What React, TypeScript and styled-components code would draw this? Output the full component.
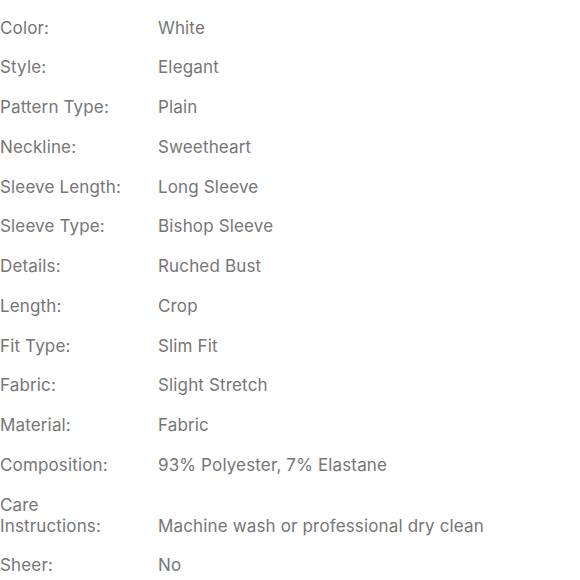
import React from "react";
import styled, { createGlobalStyle } from "styled-components";

const Global = createGlobalStyle`
  html, body { margin: 0; padding: 0; background: #ffffff; }
  body { font-family: Inter, "Noto Sans", "Liberation Sans", sans-serif; }
`;

const Table = styled.div`
  display: grid;
  grid-template-columns: 158px 1fr;
  row-gap: 18.75px;
  padding-top: 17.5px;
  align-items: end;
  font-size: 17px;
  line-height: 21px;
  letter-spacing: 0.15px;
  color: #767676;
`;

const Label = styled.div`
  white-space: pre-line;
`;

const Value = styled.div``;

const rows: [string, string][] = [
  ["Color:", "White"],
  ["Style:", "Elegant"],
  ["Pattern Type:", "Plain"],
  ["Neckline:", "Sweetheart"],
  ["Sleeve Length:", "Long Sleeve"],
  ["Sleeve Type:", "Bishop Sleeve"],
  ["Details:", "Ruched Bust"],
  ["Length:", "Crop"],
  ["Fit Type:", "Slim Fit"],
  ["Fabric:", "Slight Stretch"],
  ["Material:", "Fabric"],
  ["Composition:", "93% Polyester, 7% Elastane"],
  ["Care\nInstructions:", "Machine wash or professional dry clean"],
  ["Sheer:", "No"],
];

export default function App() {
  return (
    <>
      <Global />
      <Table>
        {rows.map(([k, v]) => (
          <React.Fragment key={k}>
            <Label>{k}</Label>
            <Value>{v}</Value>
          </React.Fragment>
        ))}
      </Table>
    </>
  );
}
